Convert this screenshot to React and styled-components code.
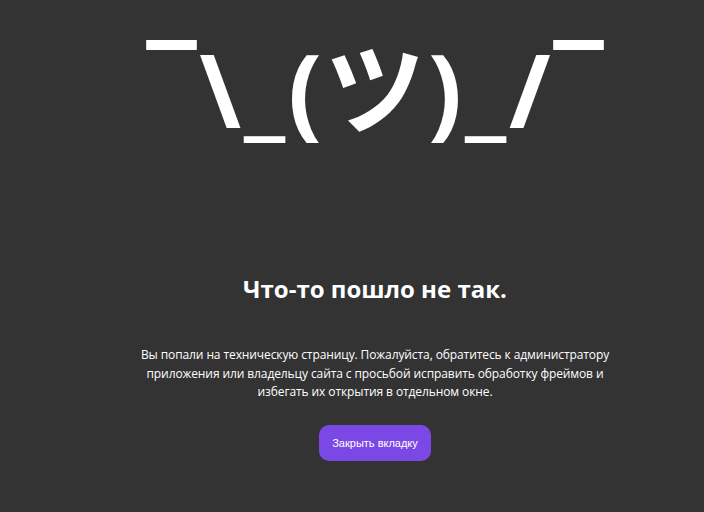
import React from "react";
import styled, { createGlobalStyle } from "styled-components";

const Global = createGlobalStyle`
  html, body { margin: 0; padding: 0; background: #333333; }
  body { font-family: "Open Sans", "Noto Sans", sans-serif; color: #ffffff; }
`;

const Page = styled.main`
  min-height: 512px;
  display: flex;
  flex-direction: column;
  align-items: center;
  box-sizing: border-box;
  padding: 21px 0 0 46px;
`;

const Shrug = styled.div`
  font-family: "Noto Sans", "Noto Sans CJK JP", sans-serif;
  font-size: 100px;
  font-weight: 700;
  line-height: 135px;
  white-space: nowrap;
  letter-spacing: 3px;
  padding-left: 3px;
`;

const Title = styled.h1`
  margin: 118px 0 0;
  font-size: 24px;
  font-weight: 700;
  line-height: 30px;
`;

const Text = styled.p`
  margin: 42px 0 0;
  width: 480px;
  text-align: center;
  font-size: 12px;
  line-height: 18.5px;
  letter-spacing: -0.1px;
`;

const Button = styled.button`
  margin-top: 23px;
  width: 112px;
  height: 36px;
  border: none;
  border-radius: 10px;
  background: #7b48e6;
  color: #ffffff;
  font-family: "Liberation Sans", Arial, sans-serif;
  font-size: 11px;
  cursor: pointer;
`;

export default function App() {
  return (
    <>
      <Global />
      <Page>
        <Shrug>¯\_(ツ)_/¯</Shrug>
        <Title>Что-то пошло не так.</Title>
        <Text>
          Вы попали на техническую страницу. Пожалуйста, обратитесь к администратору
          приложения или владельцу сайта с просьбой исправить обработку фреймов и
          избегать их открытия в отдельном окне.
        </Text>
        <Button>Закрыть вкладку</Button>
      </Page>
    </>
  );
}
